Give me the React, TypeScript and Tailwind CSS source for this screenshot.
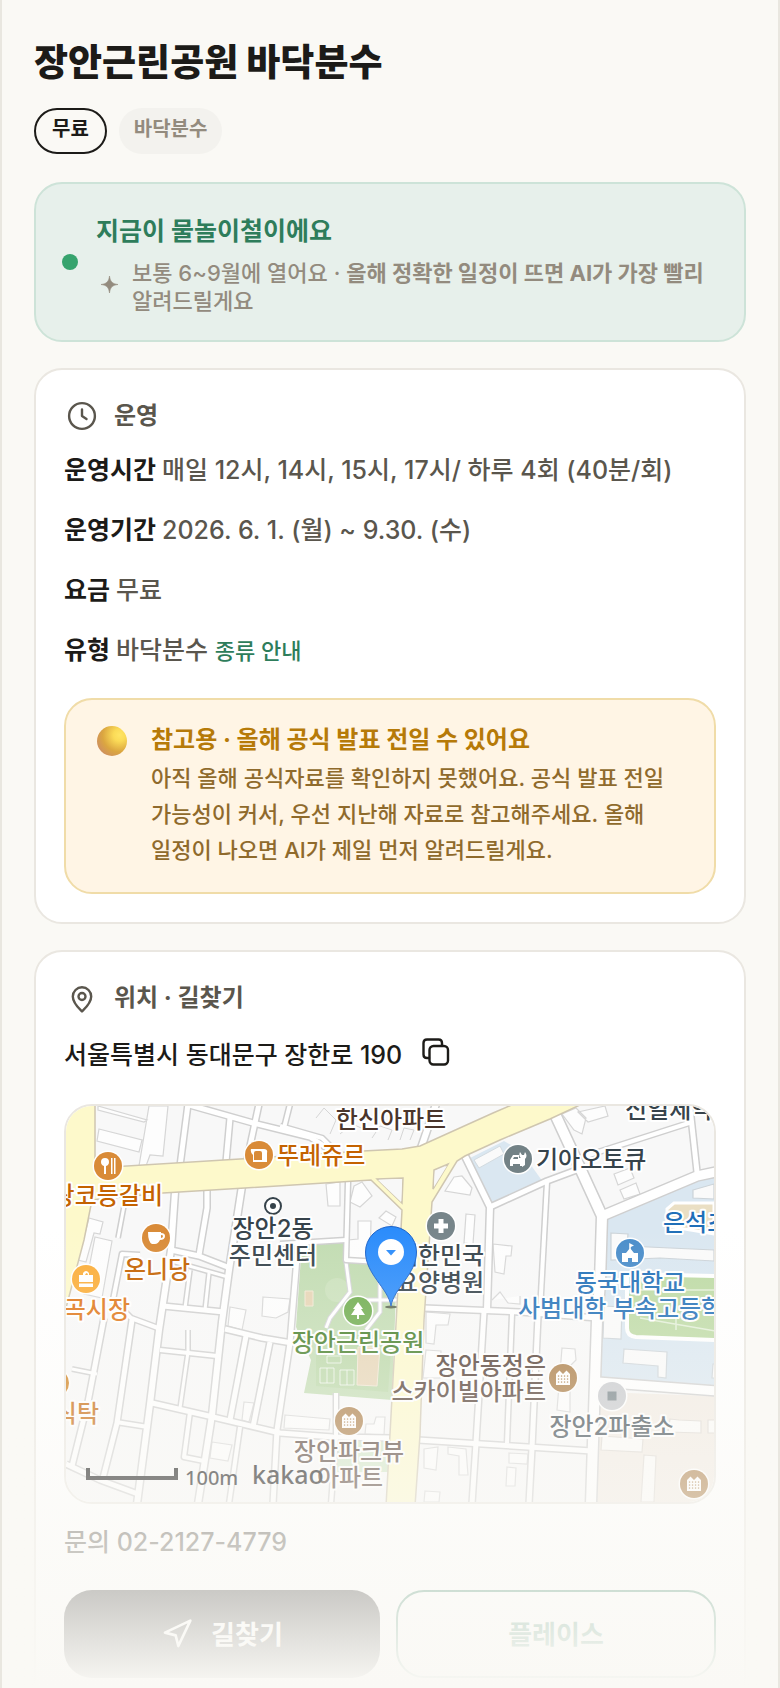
import { useState } from "react";
import { Navigation } from "lucide-react";

type Road = { d: string; w: number };

const ROADS: Road[] = [
  { d: "M188 1104L180 1166", w: 8 },
  { d: "M186 1104L253 1123L310 1137L330 1150", w: 8 },
  { d: "M230 1118L226 1162", w: 8 },
  { d: "M259 1104L247 1160", w: 8 },
  { d: "M290 1104L284 1128", w: 7 },
  { d: "M280 1126L322 1138L334 1150", w: 7 },
  { d: "M436 1104L421 1148", w: 9 },
  { d: "M175 1192L171 1250L159 1330L150 1404L137 1504", w: 9 },
  { d: "M207 1190L207 1208L199 1255", w: 8 },
  { d: "M242 1186L229 1270L222 1322L212 1415L198 1504", w: 9 },
  { d: "M171 1250L199 1256L230 1268", w: 8 },
  { d: "M168 1260L228 1277", w: 6 },
  { d: "M163 1306L224 1312", w: 8 },
  { d: "M190 1270L185 1308", w: 6 },
  { d: "M209 1273L205 1310", w: 6 },
  { d: "M124 1206L118 1238", w: 6 },
  { d: "M140 1255L122 1254L113 1300L131 1318L158 1328", w: 7 },
  { d: "M160 1350L217 1356", w: 7 },
  { d: "M188 1330L188 1352L180 1408", w: 6 },
  { d: "M225 1329L262 1338L292 1343", w: 8 },
  { d: "M246 1336L230 1420", w: 8 },
  { d: "M270 1342L253 1427", w: 8 },
  { d: "M298 1245L290 1343L277 1430L273 1504", w: 8 },
  { d: "M152 1403L213 1417L280 1433L333 1437L391 1438", w: 8 },
  { d: "M190 1412L184 1457L204 1461", w: 7 },
  { d: "M240 1427L229 1504", w: 7 },
  { d: "M132 1320L117 1423L103 1478", w: 8 },
  { d: "M116 1422L148 1427", w: 7 },
  { d: "M104 1318L88 1402L72 1466", w: 8 },
  { d: "M72 1369L97 1374", w: 6 },
  { d: "M66 1464L100 1480L138 1494", w: 8 },
  { d: "M336 1393L336 1437L331 1504", w: 7 },
  { d: "M348 1182L346 1260L380 1262", w: 7 },
  { d: "M280 1244L346 1240", w: 7 },
  { d: "M465 1156L490 1207L487 1310", w: 9 },
  { d: "M490 1207L547 1181L582 1168", w: 8 },
  { d: "M586 1156L692 1122", w: 7 },
  { d: "M690 1108L697 1172", w: 8 },
  { d: "M555 1114L580 1168L602 1216L600 1282L597 1320L591 1504", w: 13 },
  { d: "M602 1216L697 1176L716 1172", w: 12 },
  { d: "M547 1182L540 1312", w: 7 },
  { d: "M424 1308L520 1312L597 1318", w: 8 },
  { d: "M484 1312L476 1443L472 1504", w: 8 },
  { d: "M512 1314L507 1443", w: 7 },
  { d: "M538 1316L532 1448L529 1504", w: 8 },
  { d: "M418 1440L592 1451", w: 8 },
  { d: "M598 1382L716 1391", w: 12 },
];

const BUILDINGS = [
  "M98 1106L147 1120L144 1122L98 1110Z",
  "M99 1129L142 1140L139 1152L97 1141Z",
  "M149 1106L168 1106L163 1156L150 1155L146 1166L139 1166Z",
  "M89 1218L103 1222L100 1234L94 1233L86 1262L78 1260Z",
  "M95 1237L112 1241L102 1298L84 1294Z",
  "M326 1184L340 1182L340 1206L328 1206Z",
  "M354 1186L362 1182L372 1196L360 1207L350 1202Z",
  "M379 1218L386 1211L396 1217L392 1226Z",
  "M358 1221L371 1221L370 1262L348 1260L348 1240L358 1239Z",
  "M454 1177L462 1176L472 1188L470 1195L445 1191Z",
  "M466 1214L475 1215L473 1244L464 1243Z",
  "M493 1244L512 1246L511 1256L506 1256L504 1274L495 1272Z",
  "M562 1114L576 1108L586 1118L582 1134L574 1130Z",
  "M578 1112L605 1106L608 1116L588 1122Z",
  "M614 1174L630 1168L634 1178L618 1185Z",
  "M620 1190L636 1183L640 1194L624 1199Z",
  "M492 1300L500 1292L508 1303L520 1304L520 1296",
  "M426 1312L450 1314L448 1325L436 1325L434 1344L426 1343Z",
  "M426 1350L441 1351L440 1378L423 1378Z",
  "M562 1348L575 1349L576 1360L570 1366L570 1412L557 1410Z",
  "M424 1449L438 1447L436 1470L424 1468Z",
  "M448 1447L466 1449L468 1475L459 1475L459 1456L448 1454Z",
  "M509 1453L528 1454L527 1464L509 1463Z",
  "M507 1467L516 1468L515 1486L506 1486Z",
  "M425 1491L440 1492L439 1502L424 1502Z",
  "M263 1297L290 1299L288 1312L276 1318L262 1316Z",
  "M230 1307L246 1310L242 1330L228 1326Z",
  "M285 1415L330 1419L329 1430L284 1428Z",
  "M366 1424L374 1424L376 1417L385 1417L384 1435L365 1434Z",
  "M212 1442L232 1445L228 1461L210 1458Z",
  "M244 1402L254 1403L249 1422L242 1420Z",
];

const SCHOOL_BUILDINGS = [
  "M693 1190L714 1184L714 1199L693 1198Z",
  "M611 1233L628 1234L627 1246L714 1250L714 1261L660 1258L611 1260Z",
  "M604 1306L622 1307L621 1339L603 1338Z",
  "M624 1349L667 1352L666 1378L658 1377L658 1366L623 1363Z",
  "M713 1364L716 1364L716 1378L712 1378Z",
];

const BEIGE_BUILDINGS = [
  "M670 1419L679 1420L701 1421L701 1433L668 1432Z",
  "M708 1420L716 1420L716 1433L708 1433Z",
  "M602 1436L643 1439L642 1452L601 1450Z",
  "M644 1455L656 1456L654 1502L641 1502Z",
];

const SLATE = "#36434b";
const BROWN = "#4a352b";
const ORANGE = "#c46200";
const BLUE = "#1f6fb8";

const LABELS: { text: string; x: number; y: number; color: string; anchor?: "start" | "middle" | "end" }[] = [
  { text: "한신아파트", x: 391, y: 1128, color: BROWN, anchor: "middle" },
  { text: "뚜레쥬르", x: 277, y: 1164, color: ORANGE },
  { text: "왕코등갈비", x: 163, y: 1204, color: ORANGE, anchor: "end" },
  { text: "온니당", x: 157, y: 1278, color: ORANGE, anchor: "middle" },
  { text: "답십리곡시장", x: 130, y: 1318, color: "#df7414", anchor: "end" },
  { text: "진식탁", x: 99, y: 1422, color: ORANGE, anchor: "end" },
  { text: "장안2동", x: 273, y: 1237, color: SLATE, anchor: "middle" },
  { text: "주민센터", x: 273, y: 1264, color: SLATE, anchor: "middle" },
  { text: "대한민국", x: 440, y: 1264, color: SLATE, anchor: "middle" },
  { text: "요양병원", x: 440, y: 1291, color: SLATE, anchor: "middle" },
  { text: "장안근린공원", x: 358, y: 1351, color: "#3f7a22", anchor: "middle" },
  { text: "기아오토큐", x: 536, y: 1168, color: SLATE },
  { text: "신일제약", x: 625, y: 1118, color: SLATE },
  { text: "은석초", x: 663, y: 1231, color: BLUE },
  { text: "동국대학교", x: 630, y: 1291, color: BLUE, anchor: "middle" },
  { text: "사범대학 부속고등학교", x: 518, y: 1317, color: BLUE },
  { text: "장안동정은", x: 546, y: 1374, color: BROWN, anchor: "end" },
  { text: "스카이빌아파트", x: 546, y: 1400, color: BROWN, anchor: "end" },
  { text: "장안2파출소", x: 612, y: 1435, color: SLATE, anchor: "middle" },
  { text: "장안파크뷰", x: 349, y: 1460, color: BROWN, anchor: "middle" },
  { text: "아파트", x: 350, y: 1486, color: BROWN, anchor: "middle" },
];

const Poi = ({ x, y, color, children }: { x: number; y: number; color: string; children?: React.ReactNode }) => (
  <g transform={`translate(${x} ${y})`}>
    <circle r="15.5" fill="#fff" />
    <circle r="14" fill={color} />
    {children}
  </g>
);

const ApartmentGlyph = () => (
  <g>
    <path d="M-7 7V-4L-3.500-7.500L0-4L3.500-7.500L7-4V7Z" fill="#fff" />
    {[-4.5, -1.5, 1.5, 4.5].map((cx) =>
      [-2, 1, 4].map((cy) => (
        <rect key={`${cx}${cy}`} x={cx - 0.6} y={cy - 0.6} width="1.300" height="1.300" fill="#a8783f" />
      ))
    )}
  </g>
);

const ParkMap = () => (
  <svg
    viewBox="66 1106 648 396"
    preserveAspectRatio="xMidYMid slice"
    className="block h-full w-full"
    role="img"
    aria-label="장안근린공원 지도"
  >
    <rect x="0" y="1000" width="800" height="600" fill="#f8f8f8" />

    {/* land use */}
    <path d="M470 1158L504 1141L520 1150L543 1182L490 1205Z" fill="#dae7f1" />
    <path d="M605 1220L696 1180L716 1174L716 1390L598 1380Z" fill="#dae7f1" />
    <path d="M598 1392L716 1396L716 1504L592 1504Z" fill="#f2ebe3" />
    <path d="M302 1243L344 1243L348 1262L397 1264L392 1400L304 1393L311 1360L296 1327Z" fill="#c2dcb2" />
    <path d="M316 1335L392 1335L388 1392L316 1386Z" fill="#afd29a" opacity=".5" />
    <circle cx="337" cy="1290" r="12" fill="#cbe1bc" />
    <path d="M305 1291L313 1291L313 1306L305 1306ZM358 1347L380 1347L377 1386L357 1385Z" fill="#e6d4b4" stroke="#f2e7d3" />
    <path
      d="M320 1368H334V1383H320ZM340 1370H354V1385H340ZM327 1368V1383M347 1370V1385M327 1356H341V1363H327Z"
      fill="none"
      stroke="#fff"
      opacity=".7"
    />
    <path d="M346 1262L350 1292L330 1318L326 1328M380 1264V1312L366 1330M350 1300H397" fill="none" stroke="#d5d3da" strokeWidth="5" />
    <path d="M346 1262L350 1292L330 1318L326 1328M380 1264V1312L366 1330M350 1300H397" fill="none" stroke="#fff" strokeWidth="3" />
    <path d="M334 1437H390V1472H334Z" fill="#cfe5c5" />
    <path d="M674 1203L714 1203V1234L667 1226V1209Z" fill="#eadfc4" stroke="#fff" strokeWidth="3" />
    <path d="M627 1274L716 1276V1340L636 1337Q627 1336 627 1328Z" fill="#bddaa4" stroke="#fff" strokeWidth="4" />
    <path d="M640 1290H716M640 1318L716 1331M676 1312V1330" fill="none" stroke="#e3f0d8" strokeWidth="1.500" />

    {/* buildings */}
    <path d={BUILDINGS.join("")} fill="#fdfdfd" stroke="#d6d6d6" strokeWidth="1.200" />
    <path d="M474 1160L500 1146L504 1154L479 1168Z" fill="#fafafa" stroke="#d3dbe0" />
    <path d={SCHOOL_BUILDINGS.join("")} fill="#fafafa" stroke="#ccd3d8" strokeWidth="1.200" />
    <path d={BEIGE_BUILDINGS.join("")} fill="#fcfbf9" stroke="#ddd8d2" strokeWidth="1.200" />
    <path
      d="M316 1118L324 1108L336 1120L330 1134M340 1134L352 1124L366 1130M372 1138L380 1126L392 1130L388 1140M400 1140L404 1128L414 1130L410 1140"
      fill="none"
      stroke="#d6d6d6"
    />

    {/* streets */}
    <g fill="none" strokeLinejoin="round">
      {ROADS.map((road) => (
        <path key={road.d} d={road.d} stroke="#cfcfcf" strokeWidth={road.w} />
      ))}
      {ROADS.map((road) => (
        <path key={road.d} d={road.d} stroke="#fff" strokeWidth={road.w - 3} />
      ))}
    </g>

    {/* main roads */}
    <path
      fillRule="evenodd"
      d="M60 1104H95V1168L240 1159L363 1151L402 1149L420 1146L493 1113L514 1104H582L550 1119L500 1140L465 1156L457 1161L432 1202L424 1320L420 1435L415 1506H386L390 1434L397 1306L402 1210L371 1180L245 1188L163 1193L92 1200L84 1240L66 1308H60ZM377 1179L403 1178L402 1203ZM434 1170L448 1164L433 1189Z"
      fill="#fdf9cb"
      stroke="#cfc6b0"
      strokeWidth="1.500"
    />
    <path d="M378 1180L402 1179L401 1202ZM435 1171L447 1166L434 1187Z" fill="#f8f8f8" />

    {/* places */}
    <Poi x={259} y={1155} color="#d98b38">
      <path d="M-8-6H5Q9-6 8-2V7H-6V0Q-9-3-8-6Z" fill="#fff" />
      <path d="M-5-2Q-5-4-3-4H1Q3-4 3-2V5H-5Z" fill="#d98b38" />
    </Poi>
    <Poi x={108} y={1166} color="#d98b38">
      <path d="M-3-8Q1-8 1-4Q1-1-2 0V8H-4V0Q-7-1-7-4Q-7-8-3-8ZM3-8H4.500V8H3ZM6-8H7.500V8H6Z" fill="#fff" />
    </Poi>
    <Poi x={156} y={1238} color="#d98b38">
      <path d="M-8-6H5V-5Q9-5 9-2Q9 2 4 2Q2 6-1 6H-4Q-8 4-8-6ZM5-3V0Q7 0 7-2Q7-3 5-3Z" fill="#fff" fillRule="evenodd" />
    </Poi>
    <Poi x={86} y={1279} color="#fbad38">
      <path d="M-7-4H-3V-6Q0-10 3-6V-4H7V3H-7ZM-1-4H2Q1-8-1-4ZM-7 4.500H7V8H-7Z" fill="#fff" fillRule="evenodd" />
    </Poi>
    <Poi x={55} y={1383} color="#cf7c14" />
    <Poi x={441} y={1226} color="#77858a">
      <path d="M-2.500-7H2.500V-2.500H7V2.500H2.500V7H-2.500V2.500H-7V-2.500H-2.500Z" fill="#fff" />
    </Poi>
    <Poi x={518} y={1159} color="#738286">
      <path d="M-8 7V1L-5-4H1V-1H4V7H2V5H-5V7ZM4 8V0Q0-3 2-7L4-4H6L7-7Q10-3 7 0V6Z" fill="#fff" />
      <path d="M-5 0L-4-2H0V0Z" fill="#738286" />
    </Poi>
    <Poi x={630} y={1253} color="#4a8dca">
      <path d="M-.800-10L4-7.500L.800-6V-4L4 0H8V9H2V5H-2V9H-8V0H-4L-.800-4Z" fill="#fff" />
    </Poi>
    <Poi x={358} y={1311} color="#6dab4c">
      <path d="M0-9L5-2H3L7 4H1V8H-1V4H-7L-3-2H-5Z" fill="#fff" />
    </Poi>
    <Poi x={563} y={1378} color="#a8783f">
      <ApartmentGlyph />
    </Poi>
    <Poi x={349} y={1421} color="#a8783f">
      <ApartmentGlyph />
    </Poi>
    <Poi x={694} y={1484} color="#a8783f">
      <ApartmentGlyph />
    </Poi>
    <Poi x={612} y={1396} color="#c6c8cc">
      <rect x="-4.500" y="-4.500" width="9" height="9" fill="#727f84" />
    </Poi>
    <circle cx="273" cy="1206" r="8" fill="#fff" stroke={SLATE} strokeWidth="2" />
    <circle cx="273" cy="1206" r="3" fill={SLATE} />

    <g className="text-[24px] font-medium [paint-order:stroke]" stroke="#fff" strokeWidth="4" strokeLinejoin="round">
      {LABELS.map((label) => (
        <text key={label.text + label.x} x={label.x} y={label.y} fill={label.color} textAnchor={label.anchor}>
          {label.text}
        </text>
      ))}
    </g>

    {/* scale bar and provider */}
    <path d="M88 1468V1478H176V1468" fill="none" stroke="#000" strokeWidth="4" />
    <g className="font-['Noto_Sans',sans-serif]">
      <text x="185" y="1485" fontSize="20">100m</text>
      <text x="252" y="1484" fontSize="25" fontWeight="500">kakao</text>
    </g>

    {/* current place marker */}
    <ellipse cx="391" cy="1307" rx="6" ry="1.500" fill="#5a6650" />
    <path
      d="M391 1306C388 1288 365.500 1274 365.500 1252A25.500 25.500 0 0 1 416.500 1252C416.500 1274 394 1288 391 1306Z"
      fill="#2b8cfb"
      stroke="#1b62c9"
      strokeWidth="1"
    />
    <circle cx="391" cy="1252" r="13" fill="#fff" />
    <path d="M386 1250H396L391 1255.500Z" fill="#2b8cfb" />
  </svg>
);

const ClockIcon = () => (
  <svg viewBox="0 0 36 36" className="h-9 w-9" fill="none" stroke="currentColor" strokeWidth="2.400" strokeLinecap="round" strokeLinejoin="round">
    <circle cx="18" cy="18" r="12.900" />
    <path d="M18 11.500V18L22.500 21" />
  </svg>
);

const PinIcon = () => (
  <svg viewBox="0 0 36 36" className="h-9 w-9" fill="none" stroke="currentColor" strokeWidth="2.400" strokeLinejoin="round">
    <path d="M18 31.500C15 28.500 8.800 23 8.800 16.500A9.200 9.200 0 0 1 27.200 16.500C27.200 23 21 28.500 18 31.500Z" />
    <circle cx="18" cy="16.500" r="3.500" />
  </svg>
);

const CopyIcon = () => (
  <svg viewBox="0 0 28 28" className="h-7 w-7" fill="none" stroke="currentColor" strokeWidth="2.400" strokeLinecap="round" strokeLinejoin="round">
    <rect x="7.500" y="8" width="18.500" height="18.500" rx="4" />
    <path d="M7 20H5Q1.500 20 1.500 16.500V5Q1.500 1.500 5 1.500H16.500Q20 1.500 20 5V7.500" />
  </svg>
);

const BallIcon = () => (
  <svg viewBox="0 0 30 30" className="mt-1 h-[30px] w-[30px] shrink-0" aria-hidden="true">
    <defs>
      <radialGradient id="ball" cx=".75" cy=".3" r=".8">
        <stop offset="0" stopColor="#ffe565" />
        <stop offset=".25" stopColor="#fbdb57" />
        <stop offset=".7" stopColor="#dba640" />
        <stop offset="1" stopColor="#d0925c" />
      </radialGradient>
    </defs>
    <circle cx="15" cy="15" r="15" fill="url(#ball)" />
  </svg>
);

const SectionTitle = ({ icon, children }: { icon: React.ReactNode; children: React.ReactNode }) => (
  <h2 className="flex h-9 items-center gap-[14px] text-[24px] font-bold text-[#5a564d]">
    {icon}
    {children}
  </h2>
);

const Row = ({ label, children }: { label: string; children: React.ReactNode }) => (
  <div className="flex items-baseline gap-[6px]">
    <dt className="font-bold text-[#1c1b18]">{label}</dt>
    <dd>{children}</dd>
  </div>
);

const App = () => {
  const [copied, setCopied] = useState(false);
  const address = "서울특별시 동대문구 장한로 190";

  return (
    <div className="relative h-screen overflow-hidden border-x-2 border-[#e9e7e0] bg-[#faf9f5] px-8 pt-9 font-['Inter','Noto_Sans_CJK_KR',sans-serif] font-medium text-[#5a564d]">
      <h1 className="text-[37px] leading-[54px] font-extrabold text-[#1c1b18]">장안근린공원 바닥분수</h1>

      <div className="mt-[18px] flex gap-3 text-[20px] leading-[26px]">
        <span className="rounded-full border-2 border-[#1c1b18] px-4 pt-[6px] pb-[10px] font-bold text-[#1c1b18]">무료</span>
        <span className="rounded-full bg-[#f3f2ee] px-[15px] pt-2 pb-3 font-semibold text-[#938b7e]">바닥분수</span>
      </div>

      {/* SEASON */}
      <section className="mt-7 flex items-center gap-[18px] rounded-[28px] border-2 border-[#cde3d8] bg-[#e7f0eb] px-[26px] py-[25px]">
        <span className="h-4 w-4 shrink-0 rounded-full bg-[#36a36d]" />
        <div className="pt-1">
          <p className="text-[25px] leading-9 font-bold text-[#2e7d5b]">지금이 물놀이철이에요</p>
          <div className="mt-[10px] flex items-center gap-3 pl-1 text-[#938b7e]">
            <svg viewBox="0 0 20 20" className="mb-1 h-5 w-5 shrink-0" fill="currentColor" aria-hidden="true">
              <path d="M9.500 1C10.300 6.800 12.200 8.700 18 9.500C12.200 10.300 10.300 12.200 9.500 18C8.700 12.200 6.800 10.300 1 9.500C6.800 8.700 8.700 6.800 9.500 1Z" stroke="currentColor" strokeWidth=".6" />
            </svg>
            <p className="text-[22px] leading-7 break-keep">
              보통 6~9월에 열어요 · <b>올해 정확한 일정이 뜨면 AI가 가장 빨리</b> 알려드릴게요
            </p>
          </div>
        </div>
      </section>

      {/* OPERATION */}
      <section className="mt-[26px] rounded-[28px] border-2 border-[#eae7e1] bg-white p-7">
        <SectionTitle icon={<ClockIcon />}>운영</SectionTitle>
        <dl className="mt-4 flex flex-col gap-5 text-[25px] leading-10">
          <Row label="운영시간">매일 12시, 14시, 15시, 17시/ 하루 4회 (40분/회)</Row>
          <Row label="운영기간">2026. 6. 1. (월) ~ 9.30. (수)</Row>
          <Row label="요금">무료</Row>
          <Row label="유형">
            바닥분수{" "}
            <a href="#types" className="text-[22px] text-[#2e7d5b]">종류 안내</a>
          </Row>
        </dl>

        <div className="mt-[27px] flex gap-6 rounded-[28px] border-2 border-[#f0dca8] bg-[#fff5e5] pt-[22px] pr-9 pb-6 pl-[31px]">
          <BallIcon />
          <div>
            <p className="text-[24px] leading-9 font-bold text-[#b67a08]">참고용 · 올해 공식 발표 전일 수 있어요</p>
            <p className="mt-[2px] text-[22px] leading-9 break-keep text-[#8f6a2c]">
              아직 올해 공식자료를 확인하지 못했어요. 공식 발표 전일 가능성이 커서, 우선 지난해 자료로 참고해주세요. 올해 일정이 나오면 AI가 제일 먼저 알려드릴게요.
            </p>
          </div>
        </div>
      </section>

      {/* LOCATION */}
      <section className="mt-[26px] rounded-[28px] border-2 border-[#eae7e1] bg-white p-7">
        <SectionTitle icon={<PinIcon />}>위치 · 길찾기</SectionTitle>
        <div className="mt-5 flex h-10 items-center gap-5 text-[25px] text-[#1c1b18]">
          <address className="not-italic">{address}</address>
          <button
            type="button"
            aria-label={copied ? "복사됨" : "주소 복사"}
            onClick={() => setCopied(true)}
            className="mb-2 cursor-pointer"
          >
            <CopyIcon />
          </button>
        </div>

        <div className="mt-7 h-[400px] overflow-hidden rounded-[28px] border-2 border-[#eae7e1]">
          <ParkMap />
        </div>

        <p className="mt-[18px] text-[25px] leading-10">
          문의 <a href="tel:02-2127-4779">02-2127-4779</a>
        </p>

        <div className="mt-7 grid grid-cols-[79fr_80fr] gap-4 text-[26px] font-bold">
          <button type="button" className="flex h-[88px] items-center justify-center gap-[18px] rounded-[28px] bg-[#1c1b18] text-white">
            <Navigation className="h-8 w-8" />
            길찾기
          </button>
          <button type="button" className="h-[88px] rounded-[28px] border-2 border-[#2e7d5b] text-[#2e7d5b]">
            플레이스
          </button>
        </div>
      </section>

      {/* fades the page out towards the bottom */}
      <div className="pointer-events-none absolute -inset-x-[2px] bottom-0 h-[460px] bg-linear-to-b from-[#faf9f5]/0 to-[#faf9f5]" />
    </div>
  );
};

export default App;
